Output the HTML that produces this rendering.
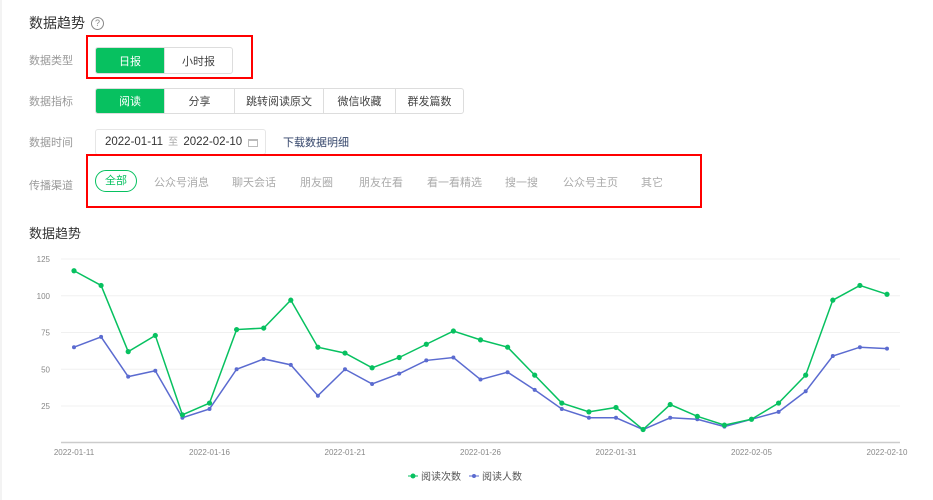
<!DOCTYPE html>
<html><head><meta charset="utf-8"><style>
*{margin:0;padding:0;box-sizing:border-box}
body{width:933px;height:500px;background:#fff;font-family:"Liberation Sans","Noto Sans CJK SC",sans-serif;position:relative;overflow:hidden;color:#333}
.a{position:absolute}
.lbl{font-size:11px;color:#999;left:29px}
.grp{display:flex;border:1px solid #ddd;border-radius:3px;overflow:hidden}
.grp div{height:100%;display:flex;align-items:center;justify-content:center;font-size:11px;color:#444;border-left:1px solid #ddd}
.grp div:first-child{border-left:none}
.grp .on{background:#07c160;color:#fff}
.red{border:2px solid #f00}
.ch{font-size:11px;color:#aaa;top:174px}
</style></head><body>
<div class="a" style="left:0;top:0;width:2px;height:500px;background:#f3f3f3"></div>
<div class="a" style="left:29px;top:13px;font-size:14px;color:#333">数据趋势</div>
<div class="a" style="left:91px;top:17px;width:13px;height:13px;border:1px solid #888;border-radius:50%;font-size:9px;color:#888;text-align:center;line-height:11px">?</div>

<div class="a lbl" style="top:52px">数据类型</div>
<div class="a red" style="left:86px;top:35px;width:167px;height:44px"></div>
<div class="a grp" style="left:95px;top:47px;width:138px;height:27px"><div class="on" style="width:68px">日报</div><div style="flex:1">小时报</div></div>

<div class="a lbl" style="top:93px">数据指标</div>
<div class="a grp" style="left:95px;top:88px;width:369px;height:26px"><div class="on" style="width:68px">阅读</div><div style="width:70px">分享</div><div style="width:89px">跳转阅读原文</div><div style="width:72px">微信收藏</div><div style="flex:1">群发篇数</div></div>

<div class="a lbl" style="top:134px">数据时间</div>
<div class="a" style="left:95px;top:129px;width:171px;height:26px;border:1px solid #e6e6e6;border-radius:3px;font-size:11.5px;color:#333;line-height:24px;padding-left:9px">2022-01-11 <span style="color:#aaa;font-size:10px;margin:0 2px">至</span> 2022-02-10<span style="position:absolute;right:7px;top:9px;width:10px;height:8px;border:1px solid #bbb;border-top-width:2px"></span></div>
<div class="a" style="left:283px;top:134px;font-size:11px;color:#35466b">下载数据明细</div>

<div class="a lbl" style="top:177px">传播渠道</div>
<div class="a red" style="left:86px;top:154px;width:616px;height:54px"></div>
<div class="a" style="left:95px;top:170px;width:42px;height:22px;border:1px solid #07c160;border-radius:11px;color:#07c160;font-size:11px;text-align:center;line-height:20px">全部</div>
<div class="a ch" style="left:154px">公众号消息</div>
<div class="a ch" style="left:232px">聊天会话</div>
<div class="a ch" style="left:300px">朋友圈</div>
<div class="a ch" style="left:359px">朋友在看</div>
<div class="a ch" style="left:427px">看一看精选</div>
<div class="a ch" style="left:505px">搜一搜</div>
<div class="a ch" style="left:563px">公众号主页</div>
<div class="a ch" style="left:641px">其它</div>

<div class="a" style="left:29px;top:223px;font-size:13px;color:#333">数据趋势</div>

<svg class="a" style="left:0;top:0" width="933" height="500" id="c"></svg>
<script>
var g=[117,107,62,73,19,27,77,78,97,65,61,51,58,67,76,70,65,46,27,21,24,9,26,18,12,16,27,46,97,107,101];
var b=[65,72,45,49,17,23,50,57,53,32,50,40,47,56,58,43,48,36,23,17,17,9,17,16,11,16,21,35,59,65,64];
var s='',X=function(i){return 74+i*27.1},Y=function(v){return 442.75-v*1.47};
[25,50,75,100,125].forEach(function(v){var y=Y(v);s+='<line x1="61" x2="900" y1="'+y+'" y2="'+y+'" stroke="#f0f0f0"/><text x="50" y="'+(y+3)+'" font-size="8" fill="#888" text-anchor="end" font-family="Liberation Sans">'+v+'</text>'});
s+='<line x1="61" x2="900" y1="442.5" y2="442.5" stroke="#ccc" stroke-width="1.5"/>';
for(var i=0;i<31;i+=5)s+='<text x="'+X(i)+'" y="455" font-size="8" fill="#888" text-anchor="middle" font-family="Liberation Sans">'+['2022-01-11','2022-01-16','2022-01-21','2022-01-26','2022-01-31','2022-02-05','2022-02-10'][i/5]+'</text>';
function line(d,c,r){var p=d.map(function(v,i){return X(i)+','+Y(v)}).join(' ');s+='<polyline points="'+p+'" fill="none" stroke="'+c+'" stroke-width="1.5"/>';d.forEach(function(v,i){s+='<circle cx="'+X(i)+'" cy="'+Y(v)+'" r="'+r+'" fill="'+c+'"/>'})}
line(b,'#5b6bd0',2);line(g,'#07c160',2.6);
s+='<line x1="408" x2="418" y1="476" y2="476" stroke="#07c160"/><circle cx="413" cy="476" r="2.5" fill="#07c160"/><text x="421" y="480" font-size="10" fill="#555" font-family="Noto Sans CJK SC">阅读次数</text>';
s+='<line x1="469" x2="479" y1="476" y2="476" stroke="#5b6bd0"/><circle cx="474" cy="476" r="2" fill="#5b6bd0"/><text x="482" y="480" font-size="10" fill="#555" font-family="Noto Sans CJK SC">阅读人数</text>';
document.getElementById('c').innerHTML=s;
</script>
</body></html>
